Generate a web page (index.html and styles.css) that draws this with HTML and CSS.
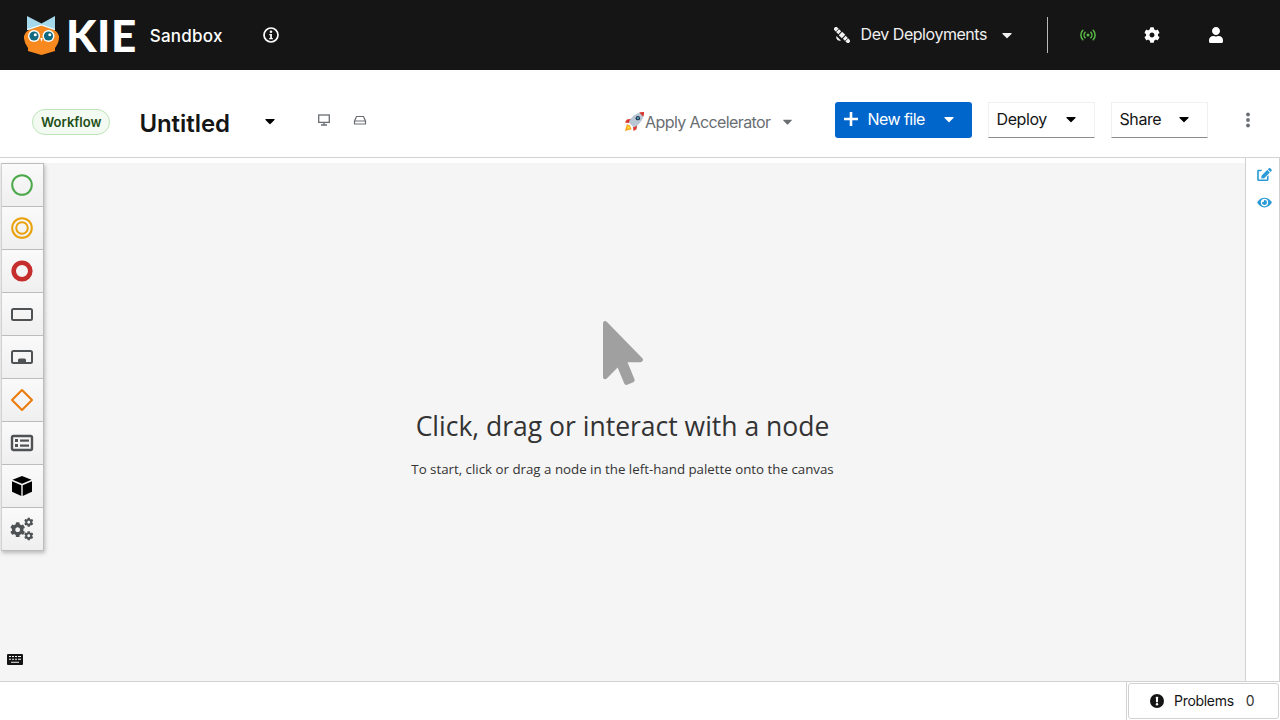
FILE: index.html
```html
<!DOCTYPE html>
<html lang="en">
<head>
    <meta charset="UTF-8">
    <title>KIE Sandbox</title>
    <link rel="stylesheet" href="styles.css">
</head>
<body>
    <svg class="defs" width="0" height="0">
        <defs>
            <path id="caret" d="M31.3 192h257.3c17.8 0 26.7 21.5 14.1 34.1L174.1 354.8c-7.8 7.8-20.5 7.8-28.3 0L17.2 226.1C4.6 213.5 13.5 192 31.3 192z"/>
            <path id="cog" d="M487.4 315.7l-42.6-24.6c4.3-23.2 4.3-47 0-70.2l42.6-24.6c4.9-2.8 7.1-8.6 5.5-14-11.1-35.6-30-67.8-54.7-94.6-3.8-4.1-10-5.1-14.8-2.3L380.8 110c-17.9-15.4-38.5-27.3-60.8-35.1V25.8c0-5.6-3.9-10.5-9.4-11.7-36.7-8.2-74.3-7.8-109.2 0-5.5 1.2-9.4 6.1-9.4 11.7V75c-22.2 7.9-42.8 19.8-60.8 35.1L88.7 85.5c-4.9-2.8-11-1.9-14.8 2.3-24.7 26.7-43.6 58.9-54.7 94.6-1.7 5.4.6 11.2 5.5 14L67.3 221c-4.3 23.2-4.3 47 0 70.2l-42.6 24.6c-4.9 2.8-7.1 8.6-5.5 14 11.1 35.6 30 67.8 54.7 94.6 3.8 4.1 10 5.1 14.8 2.3l42.6-24.6c17.9 15.4 38.5 27.3 60.8 35.1v49.2c0 5.6 3.9 10.5 9.4 11.7 36.7 8.2 74.3 7.8 109.2 0 5.5-1.2 9.4-6.1 9.4-11.7v-49.2c22.2-7.9 42.8-19.8 60.8-35.1l42.6 24.6c4.9 2.8 11 1.9 14.8-2.3 24.7-26.7 43.6-58.9 54.7-94.6 1.5-5.5-.7-11.3-5.6-14.1zM256 336c-44.1 0-80-35.9-80-80s35.9-80 80-80 80 35.9 80 80-35.9 80-80 80z"/>
        </defs>
    </svg>

    <header class="masthead">
        <div class="brand">
            <svg class="owl" viewBox="0 0 36 39" width="36" height="39">
                <path d="M3 0 L17.5 7.500 L31 0 L31 14 L3 14 Z" fill="#a4d8ea"/>
                <path d="M8 13 L17.500 9.500 L27 13 Q33 14 35 20 Q35.500 26 31 32 L31 35 L17.500 39 L4 35 L4 32 Q-0.500 26 0 20 Q2 14 8 13Z" fill="#f7891f"/>
                <path d="M3 13.500 L17.500 9 L31 13.500" fill="none" stroke="#fff" stroke-width="1"/>
                <circle cx="10" cy="20" r="6" fill="#fff"/>
                <circle cx="24.500" cy="20" r="6" fill="#fff"/>
                <circle cx="10" cy="20" r="4.600" fill="#126a80"/>
                <circle cx="24.500" cy="20" r="4.600" fill="#126a80"/>
                <circle cx="11.300" cy="18.800" r="1.500" fill="#fff"/>
                <circle cx="25.800" cy="18.800" r="1.500" fill="#fff"/>
                <path d="M16.300 22 L18.700 22 L17.500 26 Z" fill="#fff"/>
            </svg>
            <span class="logo-text">KIE</span>
            <span class="sandbox">Sandbox</span>
            <svg class="info" viewBox="0 0 16 16" width="16" height="16">
                <circle cx="8" cy="8" r="7" fill="none" stroke="#fff" stroke-width="1.700"/>
                <circle cx="8" cy="4.800" r="1.300" fill="#fff"/>
                <path d="M6.300 7h2.600v4h.9v1.300H6.200V11h1V8.200h-.9z" fill="#fff"/>
            </svg>
        </div>
        <div class="mast-tools">
            <div class="dev-menu">
                <svg class="satellite" viewBox="0 0 16 16" width="16" height="16" fill="#f0f0f0">
                    <g transform="rotate(-45 8 8)">
                        <rect x="5.600" y="5.800" width="4.800" height="4.400"/>
                        <rect x="6" y="-2.500" width="4" height="7.300"/>
                        <rect x="6" y="11.200" width="4" height="7.300"/>
                        <path d="M6 1.500h4M6 14.500h4" stroke="#151515" stroke-width="0.800"/>
                        <path d="M4.800 4.800 A3.500 3.500 0 0 0 4.800 11.200Z" transform="translate(-1.500 0)"/>
                    </g>
                </svg>
                <span>Dev Deployments</span>
                <svg class="caret" viewBox="0 0 320 512" width="12" height="16"><use href="#caret"/></svg>
            </div>
            <div class="mast-divider"></div>
            <svg class="mast-icon signal" viewBox="0 0 16 16" width="16" height="16" fill="none" stroke="#5ab946" stroke-width="1.500" stroke-linecap="round">
                <circle cx="8" cy="8" r="1.500" fill="#5ab946" stroke="none"/>
                <path d="M5.200 5.200a4 4 0 0 0 0 5.600M10.800 5.200a4 4 0 0 1 0 5.600"/>
                <path d="M2.800 3.200a7 7 0 0 0 0 9.600M13.200 3.200a7 7 0 0 1 0 9.600"/>
            </svg>
            <svg class="mast-icon" viewBox="0 0 512 512" width="16" height="16" fill="#fff"><use href="#cog"/></svg>
            <svg class="mast-icon" viewBox="0 0 448 512" width="16" height="16" fill="#fff">
                <path d="M224 256c70.700 0 128-57.300 128-128S294.700 0 224 0 96 57.300 96 128s57.300 128 128 128zm89.600 32h-16.700c-22.200 10.200-46.900 16-72.900 16s-50.600-5.800-72.900-16h-16.700C60.200 288 0 348.200 0 422.400V464c0 26.500 21.500 48 48 48h352c26.500 0 48-21.500 48-48v-41.600c0-74.200-60.200-134.400-134.400-134.400z"/>
            </svg>
        </div>
    </header>

    <section class="toolbar">
        <span class="label">Workflow</span>
        <span class="file-name">Untitled</span>
        <svg class="name-caret" viewBox="0 0 320 512" width="12" height="16"><use href="#caret"/></svg>
        <svg class="view-icon monitor" viewBox="0 0 14 14" width="14" height="14" fill="none" stroke="#6a6e73" stroke-width="1.300">
            <rect x="1.700" y="2" width="10.600" height="7.400"/>
            <path d="M7 9.500v2.200M4 12h6"/>
        </svg>
        <svg class="view-icon drive" viewBox="0 0 14 14" width="14" height="14" fill="none" stroke="#6a6e73" stroke-width="1.200">
            <path d="M1.500 8 L3.500 3.500 H10.500 L12.500 8 V11 H1.500 Z M1.500 8 H12.500"/>
        </svg>
        <div class="accelerator">
            <svg class="rocket" viewBox="0 0 22 22" width="21" height="21">
                <path d="M3 14 L1 21 L8 19 L6 15Z" fill="#f6a020"/>
                <path d="M4 15 L3 19 L7 18Z" fill="#ffd83b"/>
                <path d="M8 8 L3 9 L1 12 L5 12.500Z" fill="#d9342b"/>
                <path d="M14 14 L13 19 L10 21 L9.500 17Z" fill="#d9342b"/>
                <path d="M5 12 C7 6 13 1.500 21 1 C20.500 9 16 15 10 17 Z" fill="#b9c6d3"/>
                <path d="M16 1.700 C18 1.200 20 1 21 1 C21 2.500 20.700 4 20.300 6 Z" fill="#d9342b"/>
                <circle cx="14.500" cy="7.500" r="2.300" fill="#23313f"/>
                <circle cx="14.500" cy="7.500" r="1.200" fill="#4fa3d9"/>
            </svg>
            <span class="accelerator-text">Apply Accelerator</span>
            <svg class="caret" viewBox="0 0 320 512" width="11" height="15"><use href="#caret"/></svg>
        </div>
        <button class="btn-primary">
            <svg viewBox="0 0 14 14" width="14" height="14" fill="#fff"><path d="M5.700 0h2.600v5.700H14v2.600H8.300V14H5.700V8.300H0V5.700h5.700z"/></svg>
            <span class="btn-text">New file</span>
            <svg viewBox="0 0 320 512" width="12" height="16" fill="#fff"><use href="#caret"/></svg>
        </button>
        <button class="btn-menu deploy"><span>Deploy</span><svg viewBox="0 0 320 512" width="12" height="16"><use href="#caret"/></svg></button>
        <button class="btn-menu share"><span>Share</span><svg viewBox="0 0 320 512" width="12" height="16"><use href="#caret"/></svg></button>
        <svg class="kebab" viewBox="0 0 4 16" width="4" height="16" fill="#6a6e73">
            <circle cx="2" cy="2.500" r="1.900"/>
            <circle cx="2" cy="8" r="1.900"/>
            <circle cx="2" cy="13.500" r="1.900"/>
        </svg>
    </section>

    <main class="workspace">
        <div class="canvas">
            <div class="palette">
                <div class="node"><svg viewBox="0 0 24 24" width="24" height="24"><circle cx="12" cy="12" r="9.800" fill="none" stroke="#4ca84a" stroke-width="2"/></svg></div>
                <div class="node"><svg viewBox="0 0 24 24" width="24" height="24" fill="none" stroke="#eaa008" stroke-width="2"><circle cx="12" cy="12" r="9.800"/><circle cx="12" cy="12" r="5.800"/></svg></div>
                <div class="node"><svg viewBox="0 0 24 24" width="24" height="24"><circle cx="12" cy="12" r="8.300" fill="none" stroke="#c62d2d" stroke-width="4.600"/></svg></div>
                <div class="node"><svg viewBox="0 0 24 24" width="24" height="24"><rect x="2" y="7" width="20" height="11" rx="1.500" fill="none" stroke="#4f5255" stroke-width="2"/></svg></div>
                <div class="node"><svg viewBox="0 0 24 24" width="24" height="24" fill="#4f5255"><rect x="2" y="6" width="20" height="12" rx="1.500" fill="none" stroke="#4f5255" stroke-width="2"/><path d="M8 18v-3a1.500 1.500 0 0 1 1.500-1.500h5A1.500 1.500 0 0 1 16 15v3z"/></svg></div>
                <div class="node"><svg viewBox="0 0 24 24" width="24" height="24"><path d="M12 2 L22 12 L12 22 L2 12 Z" fill="none" stroke="#ec7a08" stroke-width="2" stroke-linejoin="round"/></svg></div>
                <div class="node"><svg viewBox="0 0 24 24" width="24" height="24" fill="#4f5255"><rect x="2" y="5" width="20" height="14" rx="1.500" fill="none" stroke="#4f5255" stroke-width="2.400"/><rect x="5" y="8" width="3" height="3"/><rect x="5" y="13" width="3" height="3"/><rect x="10" y="8.500" width="9" height="2.200"/><rect x="10" y="13.500" width="9" height="2.200"/></svg></div>
                <div class="node"><svg viewBox="0 0 24 24" width="24" height="24" fill="#000"><path d="M12 2 L21.500 5.800 L12 9.800 L2.500 5.800Z"/><path d="M2 7.300 L11.300 11.200 V22 L2 17.800Z"/><path d="M22 7.300 L12.700 11.200 V22 L22 17.800Z"/></svg></div>
                <div class="node">
                    <svg viewBox="0 0 24 24" width="24" height="24" fill="#4f5255">
                        <use href="#cog" transform="translate(0 5) scale(0.03)"/>
                        <use href="#cog" transform="translate(14 0.500) scale(0.0185)"/>
                        <use href="#cog" transform="translate(14 14) scale(0.0185)"/>
                    </svg>
                </div>
            </div>

            <div class="empty-state">
                <svg class="pointer" viewBox="0 0 320 512" width="40" height="64" fill="#a0a0a0">
                    <path d="M302.189 329.126H196.105l55.831 135.993c3.889 9.428-.555 19.999-9.444 23.999l-49.165 21.427c-9.165 4-19.443-.571-23.332-9.714l-53.053-129.136-86.664 89.138C18.729 472.71 0 463.554 0 447.977V18.299C0 1.899 19.921-6.096 30.277 5.443l284.412 292.542c11.472 11.179 3.007 31.141-12.500 31.141z"/>
                </svg>
                <h2>Click, drag or interact with a node</h2>
                <p>To start, click or drag a node in the left-hand palette onto the canvas</p>
            </div>

            <svg class="keyboard" viewBox="0 0 16 11" width="16" height="11">
                <rect width="16" height="11" rx="1" fill="#151515"/>
                <path d="M2 2.500h2M5 2.500h2M8 2.500h2M11 2.500h3M2 5.300h2M5 5.300h2M8 5.300h2M11 5.300h3M4 8.200h8" stroke="#f5f5f5" stroke-width="1.100"/>
            </svg>
        </div>
        <aside class="side-panel">
            <svg viewBox="0 0 576 512" width="15" height="13" fill="#2b9ad6">
                <path d="M402.600 83.200l90.200 90.200c3.800 3.800 3.800 10 0 13.800L274.400 405.600l-92.800 10.300c-12.400 1.400-22.900-9.100-21.500-21.500l10.300-92.800L388.800 83.200c3.800-3.800 10-3.800 13.800 0zm162-22.900l-48.800-48.800c-15.200-15.200-39.900-15.200-55.200 0l-35.400 35.400c-3.800 3.800-3.800 10 0 13.800l90.200 90.200c3.800 3.800 10 3.800 13.800 0l35.400-35.400c15.200-15.300 15.200-40 0-55.200zM384 346.200V448H64V128h73.100c3.200 0 6.200-1.300 8.500-3.500l40-40c7.600-7.600 2.200-20.500-8.500-20.500H48C21.500 64 0 85.500 0 112v352c0 26.500 21.500 48 48 48h352c26.500 0 48-21.500 48-48V306.200c0-10.700-12.900-16-20.500-8.500l-40 40c-2.200 2.300-3.500 5.300-3.500 8.500z"/>
            </svg>
            <svg viewBox="0 0 576 512" width="15" height="13" fill="#2b9ad6">
                <path d="M572.520 241.400C518.290 135.590 410.930 64 288 64S57.680 135.640 3.480 241.410a32.350 32.350 0 0 0 0 29.190C57.710 376.410 165.070 448 288 448s230.320-71.640 284.520-177.410a32.350 32.350 0 0 0 0-29.190zM288 400a144 144 0 1 1 144-144 143.930 143.930 0 0 1-144 144zm0-240a95.310 95.310 0 0 0-25.310 3.790 47.850 47.850 0 0 1-66.900 66.900A95.780 95.780 0 1 0 288 160z"/>
            </svg>
        </aside>
    </main>

    <footer class="status-bar">
        <div class="problems-wrap">
            <div class="problems">
                <svg viewBox="0 0 16 16" width="14" height="14">
                    <circle cx="8" cy="8" r="8" fill="#151515"/>
                    <rect x="6.800" y="3" width="2.400" height="6.500" rx="0.600" fill="#fff"/>
                    <circle cx="8" cy="11.800" r="1.400" fill="#fff"/>
                </svg>
                <span class="problems-text">Problems</span>
                <span class="problems-count">0</span>
            </div>
        </div>
    </footer>
</body>
</html>
```

FILE: styles.css
```css
* {
    margin: 0;
    padding: 0;
    box-sizing: border-box;
}

body {
    display: flex;
    flex-direction: column;
    height: 720px;
    overflow: hidden;
    background: #fff;
    color: #151515;
    font-family: 'Inter', 'Noto Sans', sans-serif;
    font-size: 16px;
}

.defs {
    position: absolute;
}

/* top black bar */
.masthead {
    display: flex;
    align-items: center;
    justify-content: space-between;
    flex: 0 0 70px;
    padding-left: 24px;
    background: #151515;
    color: #fff;
}

.brand {
    display: flex;
    align-items: center;
}

.logo-text {
    margin-left: 6px;
    font-family: 'Lato', sans-serif;
    font-size: 44px;
    font-weight: 900;
    line-height: 40px;
    letter-spacing: 0.5px;
}

.sandbox {
    margin: 2px 0 0 13px;
    font-size: 17px;
    font-weight: 500;
    letter-spacing: 0.25px;
}

.info {
    margin-left: 40px;
}

.mast-tools {
    display: flex;
    align-items: center;
}

.dev-menu {
    display: flex;
    align-items: center;
    color: #f0f0f0;
    letter-spacing: -0.45px;
}

.dev-menu span {
    margin: 0 0 2px 11px;
}

.dev-menu .caret {
    margin-left: 14px;
    fill: #f0f0f0;
}

.mast-divider {
    width: 1px;
    height: 36px;
    margin: 0 32px 0 34px;
    background: #b8bbbe;
}

.mast-icon {
    margin-right: 48px;
}

.mast-icon:last-child {
    margin-right: 56px;
}

/* file toolbar */
.toolbar {
    display: flex;
    align-items: center;
    flex: 0 0 88px;
    padding: 12px 28px 0 32px;
    border-bottom: 1px solid #d2d2d2;
    white-space: nowrap;
}

.label {
    display: flex;
    align-items: center;
    height: 26px;
    margin-top: 5px;
    padding: 0 8px;
    border: 1px solid #bde5b8;
    border-radius: 13px;
    background: #f3faf2;
    color: #1e4f18;
    font-size: 13px;
    font-weight: 600;
}

.file-name {
    margin: 7px 0 0 29px;
    font-size: 24px;
    font-weight: 600;
    letter-spacing: -0.05px;
}

.name-caret {
    margin: 2px 0 0 34px;
}

.view-icon.monitor {
    margin-left: 41px;
}

.view-icon.drive {
    margin-left: 22px;
}

.accelerator {
    display: flex;
    align-items: center;
    margin: 4px 0 0 257px;
    color: #6a6e73;
    letter-spacing: -0.6px;
}

.accelerator .caret {
    margin-left: 12px;
    fill: #6a6e73;
}

button {
    display: flex;
    align-items: center;
    height: 36px;
    padding-bottom: 1px;
    border: none;
    background: none;
    font-family: inherit;
    font-size: 16px;
    letter-spacing: -0.4px;
}

.btn-primary {
    width: 137px;
    margin-left: 42px;
    padding-left: 9px;
    border-radius: 3px;
    background: #06c;
    color: #fff;
}

.btn-text {
    margin: 0 18px 0 9px;
    letter-spacing: -0.55px;
}

.btn-menu {
    justify-content: space-between;
    border: 1px solid #f0f0f0;
    border-bottom-color: #8a8d90;
    color: #151515;
}

.deploy {
    width: 107px;
    margin-left: 16px;
    padding: 0 17px 1px 7px;
}

.share {
    width: 97px;
    margin-left: 16px;
    padding: 0 17px 1px 7px;
}

.kebab {
    margin-left: 38px;
}

/* canvas area */
.workspace {
    display: flex;
    flex: 1;
    min-height: 0;
    padding-top: 5px;
    border-bottom: 1px solid #d2d2d2;
}

.canvas {
    position: relative;
    display: flex;
    flex: 1;
    align-items: center;
    justify-content: center;
    padding-bottom: 46px;
    background: #f5f5f5;
}

.palette {
    position: absolute;
    top: 0;
    left: 1px;
    width: 43px;
    border: 1px solid #bcbcbc;
    border-left-color: #d2d2d2;
    box-shadow: 1px 2px 4px rgba(0, 0, 0, 0.25);
}

.node {
    display: flex;
    align-items: center;
    justify-content: center;
    height: 43px;
    padding-right: 1px;
    border-top: 1px solid #bcbcbc;
    background: linear-gradient(#fafafa, #efefef);
}

.node:first-child {
    border-top: none;
    height: 42px;
}

.empty-state {
    display: flex;
    flex-direction: column;
    align-items: center;
    font-family: 'Open Sans', sans-serif;
    color: #333;
}

.pointer {
    margin-left: 1px;
}

.empty-state h2 {
    margin-top: 24px;
    font-size: 26.5px;
    font-weight: 400;
    line-height: 34px;
}

.empty-state p {
    margin-top: 17px;
    font-size: 13.3px;
    line-height: 18px;
    color: #333;
}

.keyboard {
    position: absolute;
    left: 7px;
    bottom: 16px;
}

.side-panel {
    display: flex;
    flex-direction: column;
    align-items: center;
    flex: 0 0 35px;
    gap: 15px;
    margin-top: -5px;
    padding: 10px 0 0 4px;
    border-left: 1px solid #d2d2d2;
    border-right: 1px solid #d2d2d2;
}

/* bottom bar */
.status-bar {
    display: flex;
    justify-content: flex-end;
    flex: 0 0 38px;
}

.problems-wrap {
    padding: 1px;
    border-left: 1px solid #d2d2d2;
}

.problems {
    display: flex;
    align-items: center;
    width: 151px;
    height: 36px;
    padding: 0 0 1px 21px;
    border: 1px solid #d2d2d2;
    border-radius: 3px;
    font-size: 14px;
    letter-spacing: -0.3px;
}

.problems-text {
    margin-left: 10px;
}

.problems-count {
    margin-left: 12px;
    color: #333;
}
```
